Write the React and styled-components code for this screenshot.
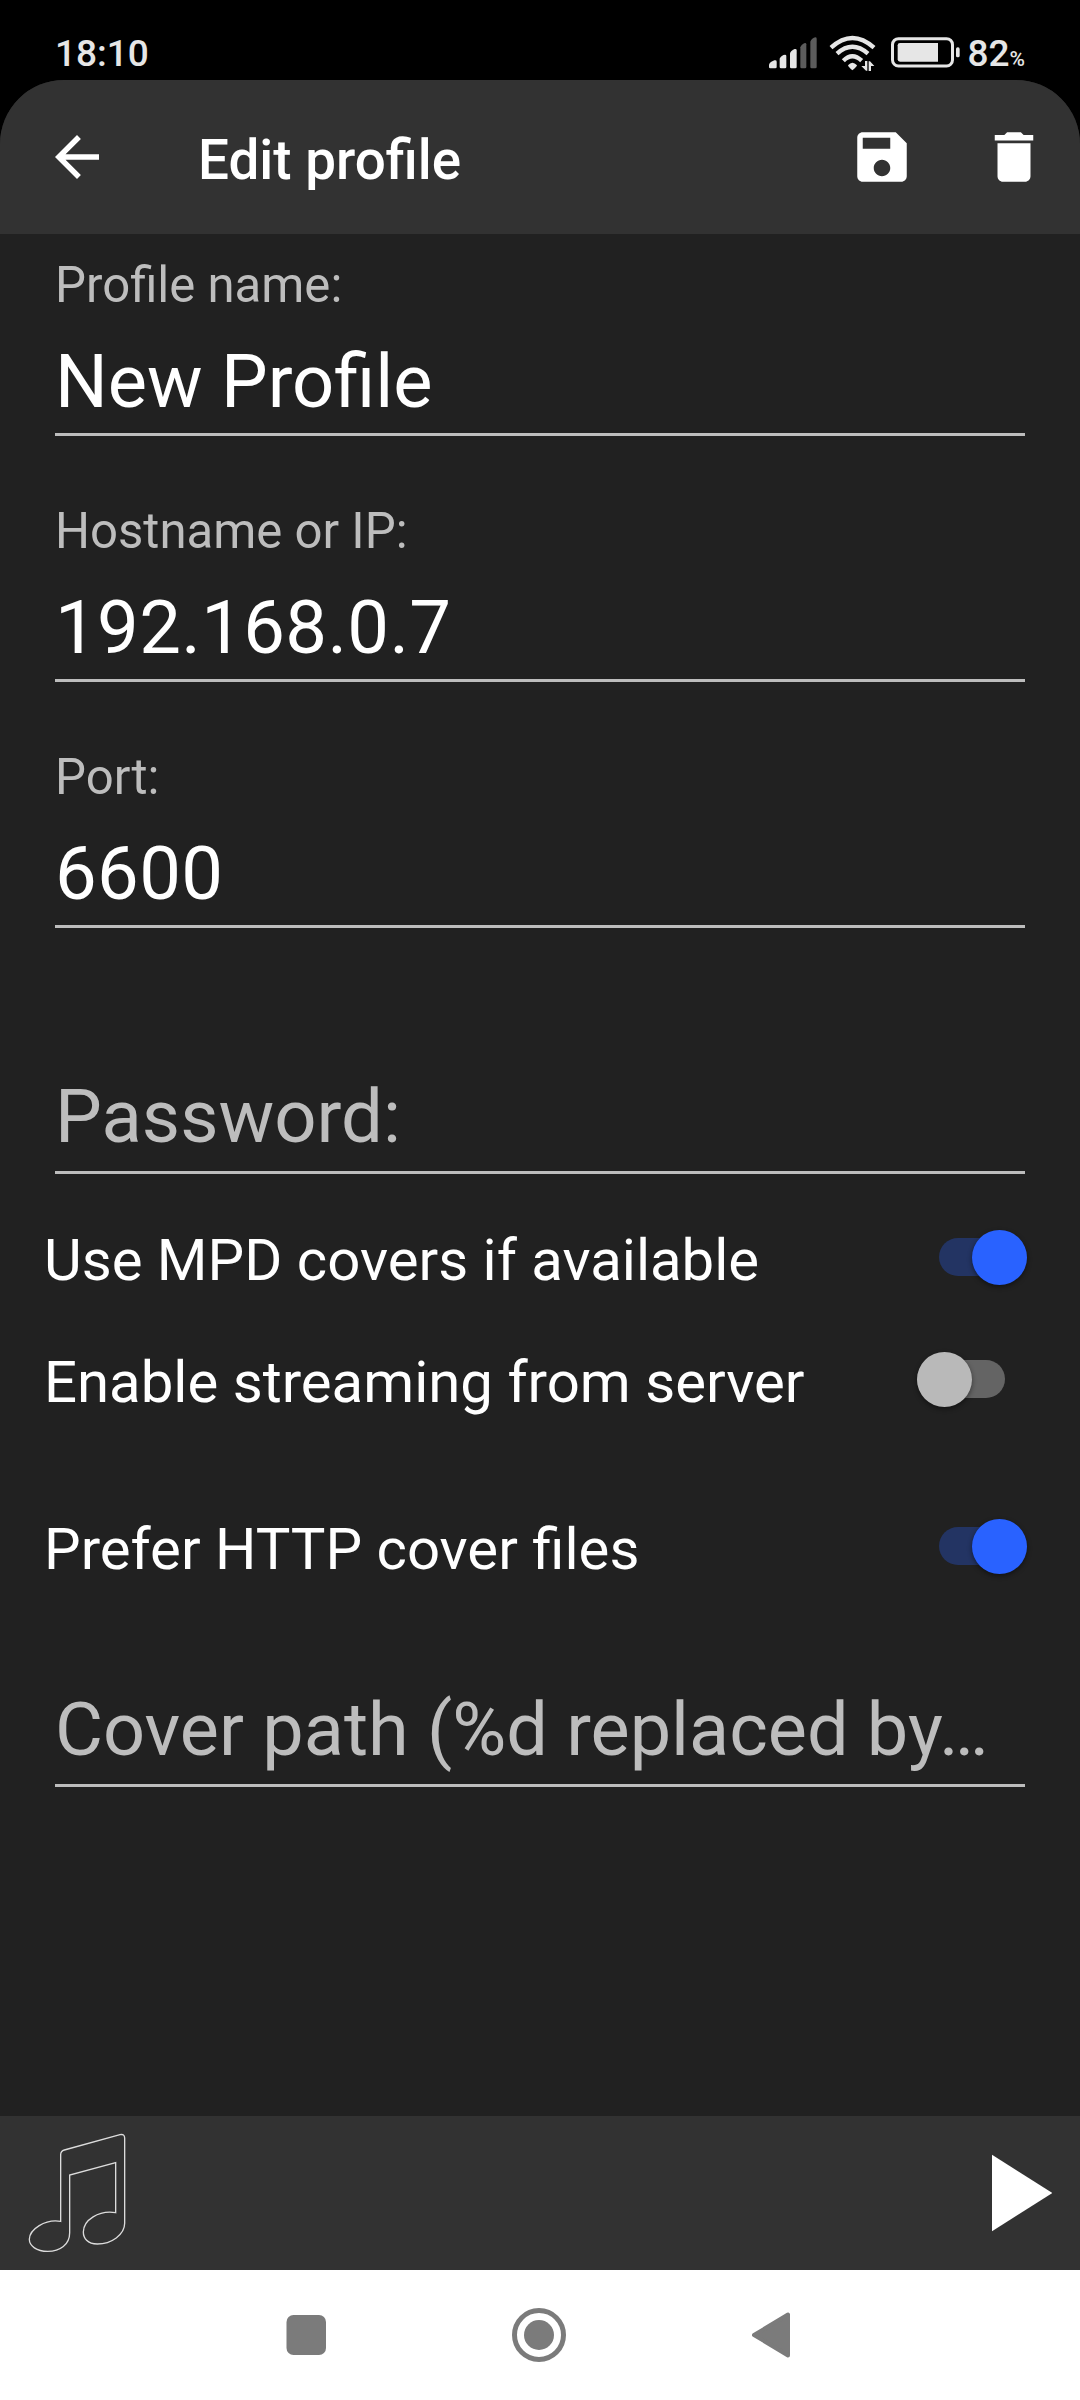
import React from "react";
import styled, { createGlobalStyle, css } from "styled-components";

const GlobalStyle = createGlobalStyle`
  * { box-sizing: border-box; }
  body { margin: 0; background: #000; font-family: Roboto, "Noto Sans", sans-serif; }
  svg { display: block; flex: none; }
`;

const Screen = styled.div`
  width: 1080px;
  height: 2400px;
  display: flex;
  flex-direction: column;
  background: #000;
  overflow: hidden;
`;

const StatusBar = styled.header`
  height: 80px;
  flex: none;
  display: flex;
  justify-content: space-between;
  padding: 31px 55px 0 55px;
  color: #e6e6e6;
`;

const Clock = styled.time`
  padding-top: 1px;
  font-size: 37px;
  line-height: 44px;
  font-weight: 500;
`;

const StatusIcons = styled.div`
  display: flex;
  align-items: flex-start;
  height: 44px;
`;

const Battery = styled.span`
  display: flex;
  align-items: baseline;
  margin-left: 7px;
  padding-top: 1px;
  font-size: 37px;
  line-height: 44px;
  font-weight: 500;
`;

const Percent = styled.small`
  font-size: 21px;
  font-weight: 500;
`;

const Window = styled.div`
  flex: 1;
  display: flex;
  flex-direction: column;
  background: #212121;
  border-radius: 64px 64px 0 0;
  overflow: hidden;
`;

const AppBar = styled.div`
  height: 154px;
  flex: none;
  display: flex;
  align-items: center;
  padding: 0 33px 0 44px;
  background: #323232;
  color: #fff;
`;

const Title = styled.h1`
  flex: 1;
  margin: 0 0 0 88px;
  padding-top: 5px;
  font-size: 54.8px;
  line-height: 66px;
  font-weight: 500;
`;

const IconButton = styled.button`
  width: 66px;
  height: 66px;
  padding: 0;
  border: 0;
  background: none;
  color: inherit;
  & + & { margin-left: 66px; }
`;

const Form = styled.main`
  flex: 1;
  display: flex;
  flex-direction: column;
`;

const Field = styled.div`
  flex: none;
  display: flex;
  flex-direction: column;
  padding: ${(p) => (p.$compact ? 0 : 22)}px 55px ${(p) => p.$bottom ?? 44}px;
`;

const Label = styled.label`
  height: 58px;
  font-size: 49.1px;
  line-height: 58px;
  color: #bdbdbd;
`;

const Value = styled.div`
  margin: 24px 0 7px;
  font-size: 74px;
  line-height: 88px;
  white-space: nowrap;
  color: #fff;
  ${(p) => p.$numeric && css`
    font-size: 74.25px;
    letter-spacing: 0.35px;
  `}
  ${(p) => p.$hint && css`
    margin: ${p.$top ?? 21}px 0 10px;
    font-size: ${p.$size ?? 74.25}px;
    color: #bdbdbd;
  `}
`;

const Underline = styled.div`
  height: 3px;
  background: #bdbdbd;
`;

const SwitchRow = styled.div`
  flex: none;
  height: 122px;
  margin-top: ${(p) => p.$gap ?? 0}px;
  display: flex;
  align-items: center;
  justify-content: space-between;
  padding: 0 ${(p) => (p.$on ? 53 : 75)}px 0 44px;
  font-size: 58.1px;
  color: #fff;
`;

const SwitchLabel = styled.span`
  padding-top: 6px;
  line-height: 68px;
  white-space: nowrap;
`;

const Track = styled.span`
  display: flex;
  justify-content: ${(p) => (p.$on ? "flex-end" : "flex-start")};
  align-items: center;
  width: 88px;
  height: 38px;
  border-radius: 19px;
  background: ${(p) => (p.$on ? "#233463" : "#646464")};
`;

const Thumb = styled.span`
  flex: none;
  width: 55px;
  height: 55px;
  border-radius: 50%;
  background: ${(p) => (p.$on ? "#2962ff" : "#b9b9b9")};
  box-shadow: 0 2px 5px rgba(0, 0, 0, 0.45);
`;

const PlayerBar = styled.footer`
  height: 154px;
  flex: none;
  display: flex;
  align-items: center;
  justify-content: space-between;
  padding: 0 28px;
  background: #323232;
`;

const NavBar = styled.nav`
  height: 130px;
  flex: none;
  display: flex;
  align-items: center;
  justify-content: space-between;
  padding: 0 290px 0 286px;
  background: #fff;
  color: #7b7b7b;
`;

const SignalIcon = () => (
  <svg width="48" height="32" viewBox="88 50 144 96" fill="currentColor">
    <path d="M88 134c0-6 12-14 19-14q4 0 4 4v16q0 4-4 4H92q-4 0-4-4z" />
    <path d="M120 115c2-6 10-12 16-12q4 0 4 4v33q0 4-4 4h-12q-4 0-4-4z" />
    <path d="M151 99c2-6 10-13 16-13q4 0 4 4v50q0 4-4 4h-12q-4 0-4-4z" />
    <path opacity="0.4" d="M182 81c2-6 9-13 14-13q4 0 4 4v68q0 4-4 4h-10q-4 0-4-4z" />
    <path opacity="0.4" d="M212 64c2-6 9-13 15-13q4 0 4 4v85q0 4-4 4h-11q-4 0-4-4z" />
  </svg>
);

const WifiIcon = () => (
  <svg width="47" height="37" viewBox="268 43 141 111" fill="none" stroke="currentColor" strokeWidth="13">
    <path d="M274 81Q338 23 403 81" />
    <path d="M292 99Q338 58 385 99" />
    <path d="M311 120Q338 93 366 120" />
    <path fill="currentColor" stroke="none" d="M325 134q13-16 27 0-1 5-14 15-12-10-13-15z" />
    <path fill="currentColor" stroke="none" d="M376 121h7v29h-4l-14-14h11zM387 151v-29h4l13 14h-10v15z" />
  </svg>
);

const BatteryIcon = () => (
  <svg width="69" height="31" viewBox="453 50 207 93" fill="none">
    <rect x="457.5" y="55" width="180" height="82" rx="18" stroke="currentColor" strokeWidth="9" />
    <path fill="currentColor" d="M480 68H594V124H480q-7 0-7-7V75q0-7 7-7z" />
    <rect x="648" y="81" width="11" height="30" rx="5" fill="currentColor" />
  </svg>
);

const MaterialIcon = ({ d }) => (
  <svg width="66" height="66" viewBox="0 0 24 24" fill="currentColor">
    <path d={d} />
  </svg>
);

const NoteIcon = () => (
  <svg width="98" height="122" viewBox="84 96 294 366" fill="none" stroke="#dcdcdc" strokeWidth="4">
    <path d="M182 364V164Q182 153 193 150L360 104Q374 101 374 114V370C374 404 334 432 292 432C262 432 250 414 250 396C250 360 296 330 347 338V188L209 225V398C209 434 180 454 143 454C110 454 88 438 88 418C88 388 136 356 182 364Z" />
  </svg>
);

const PlayIcon = () => (
  <svg width="60" height="78" viewBox="0 0 60 78" fill="#fff">
    <path d="M0 .7 60.5 39 0 77.3z" />
  </svg>
);

const fields = [
  { label: "Profile name:", value: "New Profile" },
  { label: "Hostname or IP:", value: "192.168.0.7", numeric: true },
  { label: "Port:", value: "6600", numeric: true },
];

const Toggle = ({ text, on, gap }) => (
  <SwitchRow $on={on} $gap={gap}>
    <SwitchLabel>{text}</SwitchLabel>
    <Track $on={on} role="switch" aria-checked={!!on}>
      <Thumb $on={on} />
    </Track>
  </SwitchRow>
);

const SignalSlot = styled.span`margin-top: 6px;`;
const WifiSlot = styled.span`margin: 4px 0 0 12px;`;
const BatterySlot = styled.span`margin: 6px 0 0 15px;`;

export default function App() {
  return (
    <Screen>
      <GlobalStyle />
      <StatusBar>
        <Clock>18:10</Clock>
        <StatusIcons>
          <SignalSlot><SignalIcon /></SignalSlot>
          <WifiSlot><WifiIcon /></WifiSlot>
          <BatterySlot><BatteryIcon /></BatterySlot>
          <Battery>82<Percent>%</Percent></Battery>
        </StatusIcons>
      </StatusBar>
      <Window>
        <AppBar>
          <IconButton aria-label="Back">
            <MaterialIcon d="M20 11H7.83l5.59-5.59L12 4l-8 8 8 8 1.41-1.41L7.83 13H20v-2z" />
          </IconButton>
          <Title>Edit profile</Title>
          <IconButton aria-label="Save">
            <MaterialIcon d="M17 3H5c-1.11 0-2 .9-2 2v14c0 1.1.89 2 2 2h14c1.1 0 2-.9 2-2V7l-4-4zm-5 16c-1.66 0-3-1.34-3-3s1.34-3 3-3 3 1.34 3 3-1.34 3-3 3zm3-10H5V5h10v4z" />
          </IconButton>
          <IconButton aria-label="Delete">
            <MaterialIcon d="M6 19c0 1.1.9 2 2 2h8c1.1 0 2-.9 2-2V7H6v12zM19 4h-3.5l-1-1h-5l-1 1H5v2h14V4z" />
          </IconButton>
        </AppBar>
        <Form>
          {fields.map((f) => (
            <Field key={f.label}>
              <Label>{f.label}</Label>
              <Value $numeric={f.numeric}>{f.value}</Value>
              <Underline />
            </Field>
          ))}
          <Field $bottom={22}>
            <Label />
            <Value $hint>Password:</Value>
            <Underline />
          </Field>
          <Toggle on text="Use MPD covers if available" />
          <Toggle text="Enable streaming from server" />
          <Toggle on gap={45} text="Prefer HTTP cover files" />
          <Field $compact>
            <Value $hint $top={79} $size={73.8}>Cover path (%d replaced by…</Value>
            <Underline />
          </Field>
        </Form>
        <PlayerBar>
          <NoteIcon />
          <PlayIcon />
        </PlayerBar>
        <NavBar>
          <svg width="40" height="40" viewBox="0 0 40 40" fill="currentColor">
            <rect x="0.5" width="39.5" height="40" rx="7" />
          </svg>
          <svg width="54" height="54" viewBox="0 0 54 54" fill="currentColor">
            <circle cx="27" cy="27" r="24.5" fill="none" stroke="currentColor" strokeWidth="5" />
            <circle cx="27" cy="27" r="15" />
          </svg>
          <svg width="38" height="46" viewBox="0 0 38 46" fill="currentColor" stroke="currentColor" strokeWidth="4" strokeLinejoin="round">
            <path d="M36 2.5v41L2 23z" />
          </svg>
        </NavBar>
      </Window>
    </Screen>
  );
}
